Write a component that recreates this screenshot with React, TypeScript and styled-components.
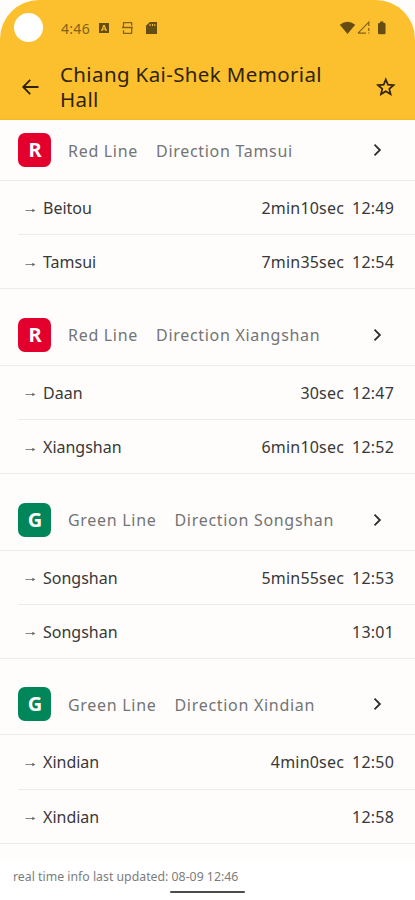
import React from "react";
import styled, { createGlobalStyle } from "styled-components";

const Global = createGlobalStyle`
  * { box-sizing: border-box; }
  body { margin: 0; background: #fff; font-family: "Noto Sans", "Open Sans", sans-serif; }
`;

const Screen = styled.div`
  width: 415px;
  height: 900px;
  display: flex;
  flex-direction: column;
  overflow: hidden;
  background: #fefdfc;
`;

const TopBar = styled.header`
  height: 120px;
  flex: none;
  background: #fcc02e;
  border-radius: 39px 39px 0 0;
  border-bottom: 1px solid #f9b920;
`;

const StatusBar = styled.div`
  height: 56px;
  display: flex;
  align-items: center;
  padding: 0 28px 0 14px;
`;

const Camera = styled.div`
  width: 29px;
  height: 29px;
  margin-top: -2px;
  border-radius: 50%;
  background: #fff;
`;

const Clock = styled.span`
  width: 37px;
  margin-left: 18px;
  font-size: 14px;
  letter-spacing: 0.3px;
  color: #80621b;
`;

const StatusIcons = styled.div<{ $end?: boolean }>`
  display: flex;
  align-items: center;
  margin-left: ${(p) => (p.$end ? "auto" : "0")};
`;

const TitleBar = styled.div`
  height: 63px;
  display: flex;
  align-items: center;
  padding: 0 19px 0 20px;
`;

const IconButton = styled.button`
  display: flex;
  padding: 0;
  border: 0;
  background: none;
  color: #2e2309;
`;

const Title = styled.h1`
  flex: 1;
  margin: -2px 0 0 19px;
  padding-right: 40px;
  font-size: 20.5px;
  font-weight: 400;
  line-height: 25px;
  letter-spacing: 0.37px;
  color: #2e2309;
`;

const List = styled.main`
  flex: 1;
  overflow: hidden;
`;

const Section = styled.section`
  height: 184.8px;
`;

const LineHead = styled.div`
  height: 61px;
  display: flex;
  align-items: center;
  padding: 0 29px 0 18px;
  border-bottom: 1px solid #ececec;
`;

const Badge = styled.div<{ $color: string }>`
  width: 33px;
  height: 34px;
  flex: none;
  display: flex;
  align-items: center;
  justify-content: center;
  padding-left: 1px;
  border-radius: 7px;
  background: ${(p) => p.$color};
  color: #fff;
  font-size: 20px;
  line-height: 34px;
  font-weight: 700;
`;

const LineText = styled.div`
  flex: 1;
  display: flex;
  gap: 18px;
  margin-left: 17px;
  padding-top: 1px;
  font-size: 16px;
  letter-spacing: 0.7px;
  color: #747474;
  white-space: nowrap;
`;

const Row = styled.div<{ $last?: boolean }>`
  height: 54.2px;
  display: flex;
  align-items: center;
  margin-left: ${(p) => (p.$last ? 0 : 18)}px;
  padding: 0 21px 0 ${(p) => (p.$last ? 24 : 6)}px;
  border-bottom: 1px solid #ececec;
  font-size: 16px;
  color: #383838;
  white-space: nowrap;
`;

const Station = styled.span`
  flex: 1;
  margin-left: 6px;
  padding-top: 1px;
`;

const Time = styled.span`
  margin-left: 8px;
  padding-top: 1px;
  letter-spacing: 0.2px;
`;

const Footer = styled.footer`
  height: 40px;
  display: flex;
  flex-direction: column;
  flex: none;
  background: #fff;
`;

const Updated = styled.div`
  height: 31px;
  padding-left: 13px;
  font-size: 12.3px;
  line-height: 33px;
  color: #7c7c7c;
  white-space: nowrap;
`;

const HomeBar = styled.div`
  width: 75px;
  height: 2px;
  margin-left: 170px;
  border-radius: 1px;
  background: #4c4c4c;
`;

const ArrowIcon = styled.svg`
  flex: none;
  margin-top: 4px;
`;

const Arrow = () => (
  <ArrowIcon width="13" height="8" viewBox="0 0 13 8" fill="none">
    <path stroke="#858585" d="M1.5 4.5H9" />
    <path fill="#666" d="M8.3 2.7L11.3 4.5L8.3 6.3Z" />
  </ArrowIcon>
);

const Chevron = () => (
  <svg width="18" height="18" viewBox="0 0 18 18" fill="none" stroke="#2d2d2d" strokeWidth="1.8">
    <path d="M6.5 3.6L11.9 9L6.5 14.4" />
  </svg>
);

type Departure = { to: string; wait?: string; at: string };
type Line = { code: string; color: string; name: string; direction: string; rows: Departure[] };

const RED = "#e3002c";
const GREEN = "#008659";

const lines: Line[] = [
  { code: "R", color: RED, name: "Red Line", direction: "Direction Tamsui", rows: [
    { to: "Beitou", wait: "2min10sec", at: "12:49" },
    { to: "Tamsui", wait: "7min35sec", at: "12:54" },
  ] },
  { code: "R", color: RED, name: "Red Line", direction: "Direction Xiangshan", rows: [
    { to: "Daan", wait: "30sec", at: "12:47" },
    { to: "Xiangshan", wait: "6min10sec", at: "12:52" },
  ] },
  { code: "G", color: GREEN, name: "Green Line", direction: "Direction Songshan", rows: [
    { to: "Songshan", wait: "5min55sec", at: "12:53" },
    { to: "Songshan", at: "13:01" },
  ] },
  { code: "G", color: GREEN, name: "Green Line", direction: "Direction Xindian", rows: [
    { to: "Xindian", wait: "4min0sec", at: "12:50" },
    { to: "Xindian", at: "12:58" },
  ] },
];

export default function App() {
  return (
    <Screen>
      <Global />
      <TopBar>
        <StatusBar>
          <Camera />
          <Clock>4:46</Clock>
          <StatusIcons>
            <svg width="60" height="16" viewBox="0 0 60 16" fill="none">
              <path fill="#654c10" fillRule="evenodd" d="M1 3H11V13H1ZM5.3 5L3 11H4.4L4.8 9.8H7.2L7.6 11H9L6.7 5ZM6 6.5L6.8 8.7H5.2Z" />
              <path stroke="#80621b" strokeWidth="1.3" d="M33.7 5.7V2.7H25.5V7.5H33.7V13.3H25.5V10.2M24 7.5H35" strokeLinejoin="round" />
              <path fill="#654c10" fillRule="evenodd" d="M51.8 2H59V14H48V5.8ZM51.5 4V6H52.6V4ZM54 4V6H55V4ZM56.3 4V6H57.3V4Z" />
            </svg>
          </StatusIcons>
          <StatusIcons $end>
            <svg width="48" height="16" viewBox="0 0 48 16" fill="none">
              <path fill="#654c10" d="M.8 4.8Q8.5-1.2 16.2 4.8L8.5 14Z" />
              <path stroke="#80621b" strokeWidth="1.2" d="M19 13.2L29.8 2.2V6M19 13.2H27M29.8 8V11M29.8 12.4V13.5" />
              <path fill="#654c10" d="M41 1.6H44.5V3H45.5Q46.5 3 46.5 4V13Q46.5 14.3 45.4 14.3H40Q39 14.3 39 13V4Q39 3 40 3H41Z" />
            </svg>
          </StatusIcons>
        </StatusBar>
        <TitleBar>
          <IconButton aria-label="Back">
            <svg width="21" height="20" viewBox="0 0 21 20" fill="none" stroke="currentColor" strokeWidth="1.8">
              <path d="M18.5 9H3.5M10.2 1.8L3.2 9L10.2 16.2" />
            </svg>
          </IconButton>
          <Title>Chiang Kai-Shek Memorial Hall</Title>
          <IconButton aria-label="Favourite">
            <svg width="21" height="21" viewBox="0 0 21 21" fill="none" stroke="currentColor" strokeWidth="1.7">
              <path d="M10.8 2.5L12.9 7.6L18.6 8.1L14.3 11.8L15.6 17.3L10.8 14.3L6 17.3L7.3 11.8L3 8.1L8.7 7.6Z" />
            </svg>
          </IconButton>
        </TitleBar>
      </TopBar>
      <List>
        {lines.map((line) => (
          <Section key={line.direction}>
            <LineHead>
              <Badge $color={line.color}>{line.code}</Badge>
              <LineText>
                <span>{line.name}</span>
                <span>{line.direction}</span>
              </LineText>
              <Chevron />
            </LineHead>
            {line.rows.map((row, i) => (
              <Row key={row.at} $last={i === line.rows.length - 1}>
                <Arrow />
                <Station>{row.to}</Station>
                {row.wait && <Time>{row.wait}</Time>}
                <Time>{row.at}</Time>
              </Row>
            ))}
          </Section>
        ))}
      </List>
      <Footer>
        <Updated>real time info last updated: 08-09 12:46</Updated>
        <HomeBar />
      </Footer>
    </Screen>
  );
}
